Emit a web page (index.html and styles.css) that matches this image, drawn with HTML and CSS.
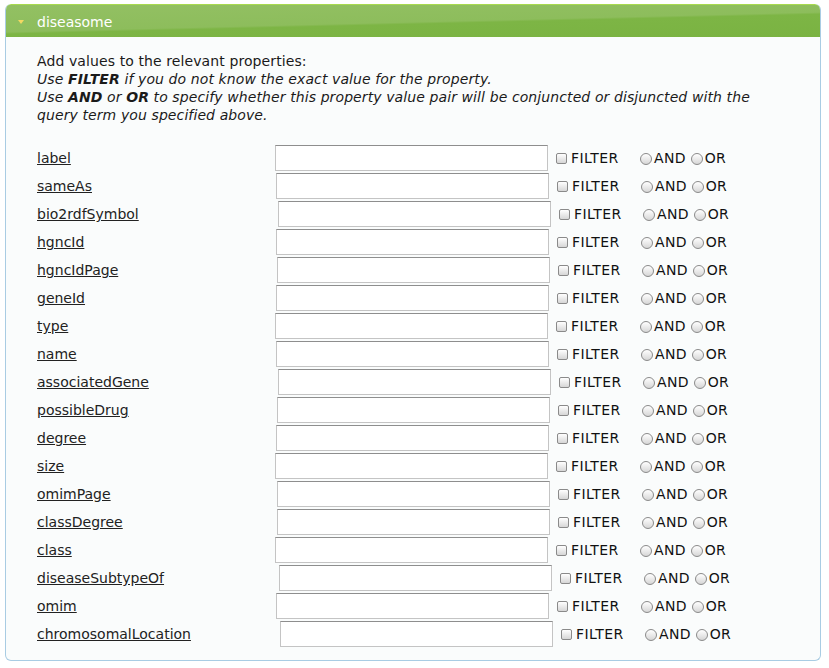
FILE: index.html
```html
<!DOCTYPE html>
<html>
<head>
<meta charset="utf-8">
<title>diseasome</title>
<link rel="stylesheet" href="styles.css">
</head>
<body>
<div class="panel">
  <div class="header">
    <span class="tri"></span>
    <span class="title">diseasome</span>
  </div>
  <div class="content">
    <p class="intro">Add values to the relevant properties:<br>
    <i>Use <b>FILTER</b> if you do not know the exact value for the property.</i><br>
    <i>Use <b>AND</b> or <b>OR</b> to specify whether this property value pair will be conjuncted or disjuncted with the query term you specified above.</i></p>
    <div class="rows">
      <div class="row o0"><a class="lbl" href="#">label</a><span class="inp"></span><span class="flt"><span class="cb"></span>FILTER</span><span class="rd"></span>AND<span class="rd r2"></span>OR</div>
      <div class="row o1"><a class="lbl" href="#">sameAs</a><span class="inp"></span><span class="flt"><span class="cb"></span>FILTER</span><span class="rd"></span>AND<span class="rd r2"></span>OR</div>
      <div class="row o3"><a class="lbl" href="#">bio2rdfSymbol</a><span class="inp"></span><span class="flt"><span class="cb"></span>FILTER</span><span class="rd"></span>AND<span class="rd r2"></span>OR</div>
      <div class="row o1"><a class="lbl" href="#">hgncId</a><span class="inp"></span><span class="flt"><span class="cb"></span>FILTER</span><span class="rd"></span>AND<span class="rd r2"></span>OR</div>
      <div class="row o2"><a class="lbl" href="#">hgncIdPage</a><span class="inp"></span><span class="flt"><span class="cb"></span>FILTER</span><span class="rd"></span>AND<span class="rd r2"></span>OR</div>
      <div class="row o1"><a class="lbl" href="#">geneId</a><span class="inp"></span><span class="flt"><span class="cb"></span>FILTER</span><span class="rd"></span>AND<span class="rd r2"></span>OR</div>
      <div class="row o0"><a class="lbl" href="#">type</a><span class="inp"></span><span class="flt"><span class="cb"></span>FILTER</span><span class="rd"></span>AND<span class="rd r2"></span>OR</div>
      <div class="row o1"><a class="lbl" href="#">name</a><span class="inp"></span><span class="flt"><span class="cb"></span>FILTER</span><span class="rd"></span>AND<span class="rd r2"></span>OR</div>
      <div class="row o3"><a class="lbl" href="#">associatedGene</a><span class="inp"></span><span class="flt"><span class="cb"></span>FILTER</span><span class="rd"></span>AND<span class="rd r2"></span>OR</div>
      <div class="row o2"><a class="lbl" href="#">possibleDrug</a><span class="inp"></span><span class="flt"><span class="cb"></span>FILTER</span><span class="rd"></span>AND<span class="rd r2"></span>OR</div>
      <div class="row o1"><a class="lbl" href="#">degree</a><span class="inp"></span><span class="flt"><span class="cb"></span>FILTER</span><span class="rd"></span>AND<span class="rd r2"></span>OR</div>
      <div class="row o0"><a class="lbl" href="#">size</a><span class="inp"></span><span class="flt"><span class="cb"></span>FILTER</span><span class="rd"></span>AND<span class="rd r2"></span>OR</div>
      <div class="row o2"><a class="lbl" href="#">omimPage</a><span class="inp"></span><span class="flt"><span class="cb"></span>FILTER</span><span class="rd"></span>AND<span class="rd r2"></span>OR</div>
      <div class="row o2"><a class="lbl" href="#">classDegree</a><span class="inp"></span><span class="flt"><span class="cb"></span>FILTER</span><span class="rd"></span>AND<span class="rd r2"></span>OR</div>
      <div class="row o0"><a class="lbl" href="#">class</a><span class="inp"></span><span class="flt"><span class="cb"></span>FILTER</span><span class="rd"></span>AND<span class="rd r2"></span>OR</div>
      <div class="row o4"><a class="lbl" href="#">diseaseSubtypeOf</a><span class="inp"></span><span class="flt"><span class="cb"></span>FILTER</span><span class="rd"></span>AND<span class="rd r2"></span>OR</div>
      <div class="row o1"><a class="lbl" href="#">omim</a><span class="inp"></span><span class="flt"><span class="cb"></span>FILTER</span><span class="rd"></span>AND<span class="rd r2"></span>OR</div>
      <div class="row o5"><a class="lbl" href="#">chromosomalLocation</a><span class="inp"></span><span class="flt"><span class="cb"></span>FILTER</span><span class="rd"></span>AND<span class="rd r2"></span>OR</div>
    </div>
  </div>
</div>
</body>
</html>
```

FILE: styles.css
```css
html, body {
  margin: 0;
  padding: 0;
  background: #ffffff;
}
body {
  padding: 4px 0 0 5px;
  font-family: "DejaVu Sans", Verdana, sans-serif;
  color: #1a1a1a;
}
.panel {
  width: 816px;
  box-sizing: border-box;
  border-radius: 6px;
  overflow: hidden;
  background: #fafcfc;
  border: 1px solid #a9cce3;
  border-top: none;
}
.header {
  height: 33px;
  box-sizing: border-box;
  margin: 0 -1px;
  border-top: 1px solid #a8da4e;
  border-radius: 6px 6px 0 0;
  background: linear-gradient(178.6deg, #93c063 0%, #8dbd5c 52%, #7db545 56%, #7ab342 100%);
  display: flex;
  align-items: center;
  padding-left: 13px;
}
.tri {
  width: 0;
  height: 0;
  border-left: 3px solid transparent;
  border-right: 3px solid transparent;
  border-top: 4px solid #f3d862;
  margin-right: 13px;
  margin-top: 1px;
}
.title {
  color: #ffffff;
  font-size: 14px;
  padding-top: 1px;
}
.content {
  padding: 15px 0 12px 31px;
}
.intro {
  margin: 0;
  font-size: 14px;
  line-height: 18px;
  width: 730px;
  letter-spacing: 0.1px;
}
.intro b {
  font-weight: bold;
}
.rows {
  margin-top: 20px;
  display: flex;
  flex-direction: column;
}
.row {
  height: 28px;
  display: flex;
  align-items: center;
  font-size: 14px;
  color: #111;
  letter-spacing: 0.3px;
}
.lbl {
  color: #222;
  text-decoration: underline;
  width: 238px;
  flex: none;
  letter-spacing: 0;
}
.o1 .lbl { width: 239px; }
.o2 .lbl { width: 240px; }
.o3 .lbl { width: 241px; }
.o4 .lbl { width: 242px; }
.o5 .lbl { width: 243px; }
.inp {
  width: 273px;
  height: 26px;
  box-sizing: border-box;
  background: #ffffff;
  border: 1px solid #c4c4c4;
  border-top-color: #8e8e8e;
  flex: none;
}
.flt {
  display: flex;
  align-items: center;
  width: 84px;
  margin-left: 8px;
  flex: none;
  letter-spacing: 0.4px;
}
.cb {
  width: 11px;
  height: 11px;
  box-sizing: border-box;
  border: 1px solid #8a8a8a;
  border-radius: 2px;
  background: linear-gradient(#ffffff, #d6d6d6);
  margin-right: 4px;
  margin-top: 1px;
}
.rd {
  width: 12px;
  height: 12px;
  box-sizing: border-box;
  border: 1px solid #8a8a8a;
  border-radius: 50%;
  background: linear-gradient(#ffffff, #d6d6d6);
  margin-right: 2px;
  margin-top: 1px;
}
.r2 {
  margin-left: 5px;
}
```
